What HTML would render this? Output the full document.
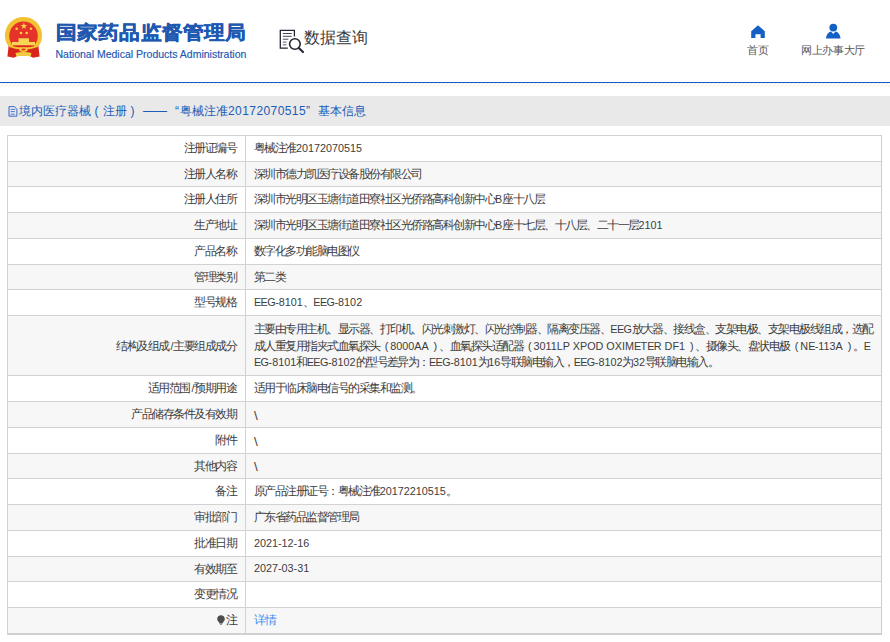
<!DOCTYPE html>
<html><head><meta charset="utf-8">
<style>
*{margin:0;padding:0;box-sizing:border-box}
html,body{width:890px;height:642px;overflow:hidden;background:#fff;font-family:"Liberation Sans",sans-serif;color:#444}
.abs{position:absolute}
#emblem{left:4px;top:16px;width:40px;height:43px}
#t1{left:56px;top:20.5px;font-size:21px;font-weight:900;color:#2057b0;white-space:nowrap;line-height:26px;letter-spacing:0.15px;-webkit-text-stroke:0.45px #2057b0;transform:scaleY(0.92);transform-origin:0 0}
#t2{left:55.5px;top:47.5px;font-size:10.5px;color:#2057b0;white-space:nowrap;line-height:13px;-webkit-text-stroke:0.15px #2057b0}
#sq{left:278px;top:28px;width:27px;height:26px}
#sqt{left:304px;top:28px;font-size:16px;color:#3a3a3a;white-space:nowrap;line-height:20px}
#home{left:750.5px;top:24.5px;width:14px;height:13.5px}
#user{left:826px;top:23px;width:15px;height:16px}
.nav{font-size:10.8px;color:#555;white-space:nowrap;line-height:13px;top:44px;width:80px;text-align:center;letter-spacing:-0.4px}
#bl{left:0;top:81.8px;width:890px;height:1.3px;background:#0d5ec6}
#hatch{left:0;top:83px;width:890px;height:4px}
#bar{left:0;top:96px;width:890px;height:30px;background:#e9e9e9;border-bottom:1px solid #e9eaf1}
#doc{left:5px;top:102px;width:16px;height:18px}
.tt{position:absolute;top:102px;font-size:12px;color:#1a5cb8;white-space:nowrap;line-height:18px}
.row{position:absolute;left:7px;width:874px;border-top:1px solid #d2d2d2}
.row.g{background:#f7f7f7}
.lab{position:absolute;left:0;width:229px;text-align:right;font-size:10.8px;white-space:nowrap;color:#3d3d3d}
.val{position:absolute;left:247px;font-size:10.8px;white-space:nowrap;color:#3d3d3d}
#vline{left:245px;top:135px;width:1px;height:499px;background:#d2d2d2}
#lline{left:7px;top:135px;width:1px;height:500px;background:#d2d2d2}
#rline{left:880.5px;top:135px;width:1.4px;height:500px;background:#cdcdcd}
#bline{left:7px;top:633px;width:875px;height:2px;background:#d0d0d0}
.bulb{display:inline-block;width:8px;height:10px;vertical-align:-1px;margin-right:0.5px}
.lnk{color:#3d8ef0}
.lnk .c{font-size:12.4px;letter-spacing:-1.2px}
.c{font-size:11.6px;letter-spacing:-1.52px}
.ue{letter-spacing:-0.6px}
.ug{letter-spacing:-0.4px}
.sl{margin-left:1.6px;margin-right:-0.3px}
.bs{font-size:13.5px;vertical-align:-1.5px}
.pp{display:inline-block;width:10.5px;text-align:right;padding-right:2px}
</style></head><body>
<svg id="emblem" class="abs" viewBox="4 16 40 43">
  <circle cx="23.5" cy="35.5" r="18.6" fill="#f1c232"/>
  <circle cx="23.5" cy="35.9" r="14.3" fill="#e5332a"/>
  <polygon points="23.9,22.6 24.7,25 27.2,25 25.2,26.5 25.9,28.9 23.9,27.4 21.9,28.9 22.6,26.5 20.6,25 23.1,25" fill="#f9d64a"/>
  <circle cx="16.7" cy="28.7" r="1.3" fill="#f6cf45"/>
  <circle cx="31" cy="28.7" r="1.3" fill="#f6cf45"/>
  <circle cx="21" cy="33" r="1.3" fill="#f6cf45"/>
  <circle cx="26.7" cy="33" r="1.3" fill="#f6cf45"/>
  <rect x="18.5" y="38.3" width="10.5" height="3.8" fill="#f7d454"/>
  <rect x="12" y="42" width="23" height="3.2" fill="#f7d454"/>
  <path d="M8.6 46 L38.4 46 L39.6 56.5 L33 57.8 L29 55.5 L18 55.5 L14 57.8 L7.4 56.5 Z" fill="#d8261c"/>
  <path d="M9 45 Q23.5 50 38 45 L38 47 Q23.5 52 9 47 Z" fill="#f1c232"/>
  <ellipse cx="23.5" cy="49.6" rx="4.3" ry="2.3" fill="#f3cc3e"/>
  <ellipse cx="23.5" cy="49.6" rx="2.2" ry="1" fill="#e5332a"/>
  <path d="M15.5 53 Q23.5 51 31.5 53 L30.5 56.5 Q23.5 55 16.5 56.5 Z" fill="#f3cc3e"/>
</svg>
<div id="t1" class="abs">国家药品监督管理局</div>
<div id="t2" class="abs">National Medical Products Administration</div>
<svg id="sq" class="abs" viewBox="278 28 27 26">
  <path d="M294.4 36.5 V30.3 H280.3 V48.1 H287.8" fill="none" stroke="#262636" stroke-width="1.3"/>
  <path d="M282.8 33.5 H291.7 M282.8 36.3 H291.7 M282.8 39.2 H288.4" stroke="#33333f" stroke-width="0.9"/>
  <path d="M282.8 42.1 H286.5 M282.8 44.8 H286.5" stroke="#50505a" stroke-width="0.9"/>
  <circle cx="294.9" cy="44" r="5.3" fill="#fff" stroke="#262636" stroke-width="1.6"/>
  <path d="M298.8 47.9 L303 52.1" stroke="#262636" stroke-width="2.1" stroke-linecap="round"/>
</svg>
<div id="sqt" class="abs">数据查询</div>
<svg id="home" class="abs" viewBox="0 0 14 13.5"><path d="M7 0.3 L13.8 6.2 V13.5 H9.6 V9.2 H4.4 V13.5 H0.2 V6.2 Z" fill="#1560c4"/></svg>
<div class="abs nav" style="left:718px">首页</div>
<svg id="user" class="abs" viewBox="0 0 15 16"><circle cx="7.3" cy="4.6" r="3.9" fill="#1560c4"/><path d="M0 15.6 C0.5 11 3 9 5 8.6 L7.3 11 L9.6 8.6 C11.6 9 14 11 14.6 15.6 Z" fill="#1560c4"/></svg>
<div class="abs nav" style="left:793px">网上办事大厅</div>
<div id="bl" class="abs"></div>
<svg id="hatch" class="abs" width="890" height="5"><defs><pattern id="hp" width="4" height="4" patternUnits="userSpaceOnUse" y="0.5"><path d="M-1 5 L5 -1" stroke="#d9d9d9" stroke-width="0.7"/></pattern></defs><rect width="890" height="5" fill="url(#hp)"/></svg>
<div id="bar" class="abs"></div>
<svg id="doc" class="abs" viewBox="5 102 16 18"><path d="M9 106.6 H14.4 L16.9 109.2 V116.2 H9 Z" fill="none" stroke="#2d62c6" stroke-width="0.95"/><path d="M10.6 109.4 H15.2 M10.6 111.6 H14.8 M10.6 114.2 H14.8" stroke="#3a6cc8" stroke-width="0.9"/></svg>
<div class="tt" style="left:19px">境内医疗器械</div>
<div class="tt" style="left:94.5px;transform:scaleY(1.1)">(</div>
<div class="tt" style="left:103px">注册</div>
<div class="tt" style="left:130.5px;transform:scaleY(1.1)">)</div>
<div class="tt" style="left:143px">——</div>
<div class="tt" style="left:175px">“</div>
<div class="tt" style="left:180px">粤械注准<span style="letter-spacing:0.42px">20172070515</span></div>
<div class="tt" style="left:306px">”</div>
<div class="tt" style="left:318px">基本信息</div>
<div class="row" style="top:135px;height:26px"><div class="lab" style="top:-1px;line-height:26px"><span class="c">注册证编号</span></div><div class="val" style="top:-1px;line-height:26px"><span class="c">粤械注准</span>20172070515</div></div>
<div class="row g" style="top:161px;height:25px"><div class="lab" style="top:-1px;line-height:25px"><span class="c">注册人名称</span></div><div class="val" style="top:-1px;line-height:25px"><span class="c">深圳市德力凯医疗设备股份有限公司</span></div></div>
<div class="row" style="top:186px;height:26px"><div class="lab" style="top:-1px;line-height:26px"><span class="c">注册人住所</span></div><div class="val" style="top:-1px;line-height:26px"><span class="c">深圳市光明区玉塘街道田寮社区光侨路高科创新中心</span>B<span class="c">座十八层</span></div></div>
<div class="row g" style="top:212px;height:26px"><div class="lab" style="top:-1px;line-height:26px"><span class="c">生产地址</span></div><div class="val" style="top:-1px;line-height:26px"><span class="c">深圳市光明区玉塘街道田寮社区光侨路高科创新中心</span>B<span class="c">座十七层、十八层、二十一层</span>2101</div></div>
<div class="row" style="top:238px;height:26px"><div class="lab" style="top:-1px;line-height:26px"><span class="c">产品名称</span></div><div class="val" style="top:-1px;line-height:26px"><span class="c">数字化多功能脑电图仪</span></div></div>
<div class="row g" style="top:264px;height:25px"><div class="lab" style="top:-1px;line-height:25px"><span class="c">管理类别</span></div><div class="val" style="top:-1px;line-height:25px"><span class="c">第二类</span></div></div>
<div class="row" style="top:289px;height:26px"><div class="lab" style="top:-1px;line-height:26px"><span class="c">型号规格</span></div><div class="val" style="top:-1px;line-height:26px"><span class="ue">EE</span><span class="ug">G</span>-8101<span class="c">、</span><span class="ue">EE</span><span class="ug">G</span>-8102</div></div>
<div class="row g" style="top:315px;height:60px"><div class="lab" style="top:20.5px;line-height:17px"><span class="c">结构及组成</span><span class="sl">/</span><span class="c">主要组成成分</span></div><div class="val" style="top:5px;line-height:16.6px"><span class="c">主要由专用主机、显示器、打印机、闪光刺激灯、闪光控制器、隔离变压器、</span><span class="ue">EE</span><span class="ug">G</span><span class="c">放大器、接线盒、支架电极、支架电极线组成，选配</span><br><span class="c">成人重复用指夹式血氧探头</span><span class="pp">(</span>8000AA<span class="pp">)</span><span class="c">、血氧探头适配器</span><span class="pp">(</span>3011LP XPOD OXIM<span class="ue">E</span>T<span class="ue">E</span>R DF1<span class="pp">)</span><span class="c">、摄像头、盘状电极</span><span class="pp">(</span>N<span class="ue">E</span>-113A<span class="pp">)</span><span class="c">。</span><span class="ue">E</span><br><span class="ue">E</span><span class="ug">G</span>-8101<span class="c">和</span><span class="ue">EE</span><span class="ug">G</span>-8102<span class="c">的型号差异为：</span><span class="ue">EE</span><span class="ug">G</span>-8101<span class="c">为</span>16<span class="c">导联脑电输入，</span><span class="ue">EE</span><span class="ug">G</span>-8102<span class="c">为</span>32<span class="c">导联脑电输入。</span></div></div>
<div class="row" style="top:375px;height:26px"><div class="lab" style="top:-1px;line-height:26px"><span class="c">适用范围</span><span class="sl">/</span><span class="c">预期用途</span></div><div class="val" style="top:-1px;line-height:26px"><span class="c">适用于临床脑电信号的采集和监测。</span></div></div>
<div class="row g" style="top:401px;height:26px"><div class="lab" style="top:-1px;line-height:26px"><span class="c">产品储存条件及有效期</span></div><div class="val" style="top:-1px;line-height:26px"><span class="bs">\</span></div></div>
<div class="row" style="top:427px;height:26px"><div class="lab" style="top:-1px;line-height:26px"><span class="c">附件</span></div><div class="val" style="top:-1px;line-height:26px"><span class="bs">\</span></div></div>
<div class="row g" style="top:453px;height:25px"><div class="lab" style="top:-1px;line-height:25px"><span class="c">其他内容</span></div><div class="val" style="top:-1px;line-height:25px"><span class="bs">\</span></div></div>
<div class="row" style="top:478px;height:26px"><div class="lab" style="top:-1px;line-height:26px"><span class="c">备注</span></div><div class="val" style="top:-1px;line-height:26px"><span class="c">原产品注册证号：粤械注准</span>20172210515<span class="c">。</span></div></div>
<div class="row g" style="top:504px;height:26px"><div class="lab" style="top:-1px;line-height:26px"><span class="c">审批部门</span></div><div class="val" style="top:-1px;line-height:26px"><span class="c">广东省药品监督管理局</span></div></div>
<div class="row" style="top:530px;height:26px"><div class="lab" style="top:-1px;line-height:26px"><span class="c">批准日期</span></div><div class="val" style="top:-1px;line-height:26px">2021-12-16</div></div>
<div class="row g" style="top:556px;height:25px"><div class="lab" style="top:-1px;line-height:25px"><span class="c">有效期至</span></div><div class="val" style="top:-1px;line-height:25px">2027-03-31</div></div>
<div class="row" style="top:581px;height:26px"><div class="lab" style="top:-1px;line-height:26px"><span class="c">变更情况</span></div><div class="val" style="top:-1px;line-height:26px"></div></div>
<div class="row g" style="top:607px;height:26px"><div class="lab" style="top:-1px;line-height:26px"><svg class="bulb" viewBox="0 0 8 10"><path d="M4 0.2C6.2 0.2 7.8 1.8 7.8 3.9C7.8 5.3 7 6.2 6.2 7.1L5.6 8.4H2.4L1.8 7.1C1 6.2 0.2 5.3 0.2 3.9C0.2 1.8 1.8 0.2 4 0.2Z" fill="#4d4d4d"/><path d="M2.7 8.8H5.3L4.9 9.8H3.1Z" fill="#777"/></svg><span class="c">注</span></div><div class="val" style="top:-1px;line-height:26px"><span class="lnk"><span class="c">详情</span></span></div></div>
<div id="vline" class="abs"></div><div id="lline" class="abs"></div><div id="rline" class="abs"></div><div id="bline" class="abs"></div>
</body></html>
